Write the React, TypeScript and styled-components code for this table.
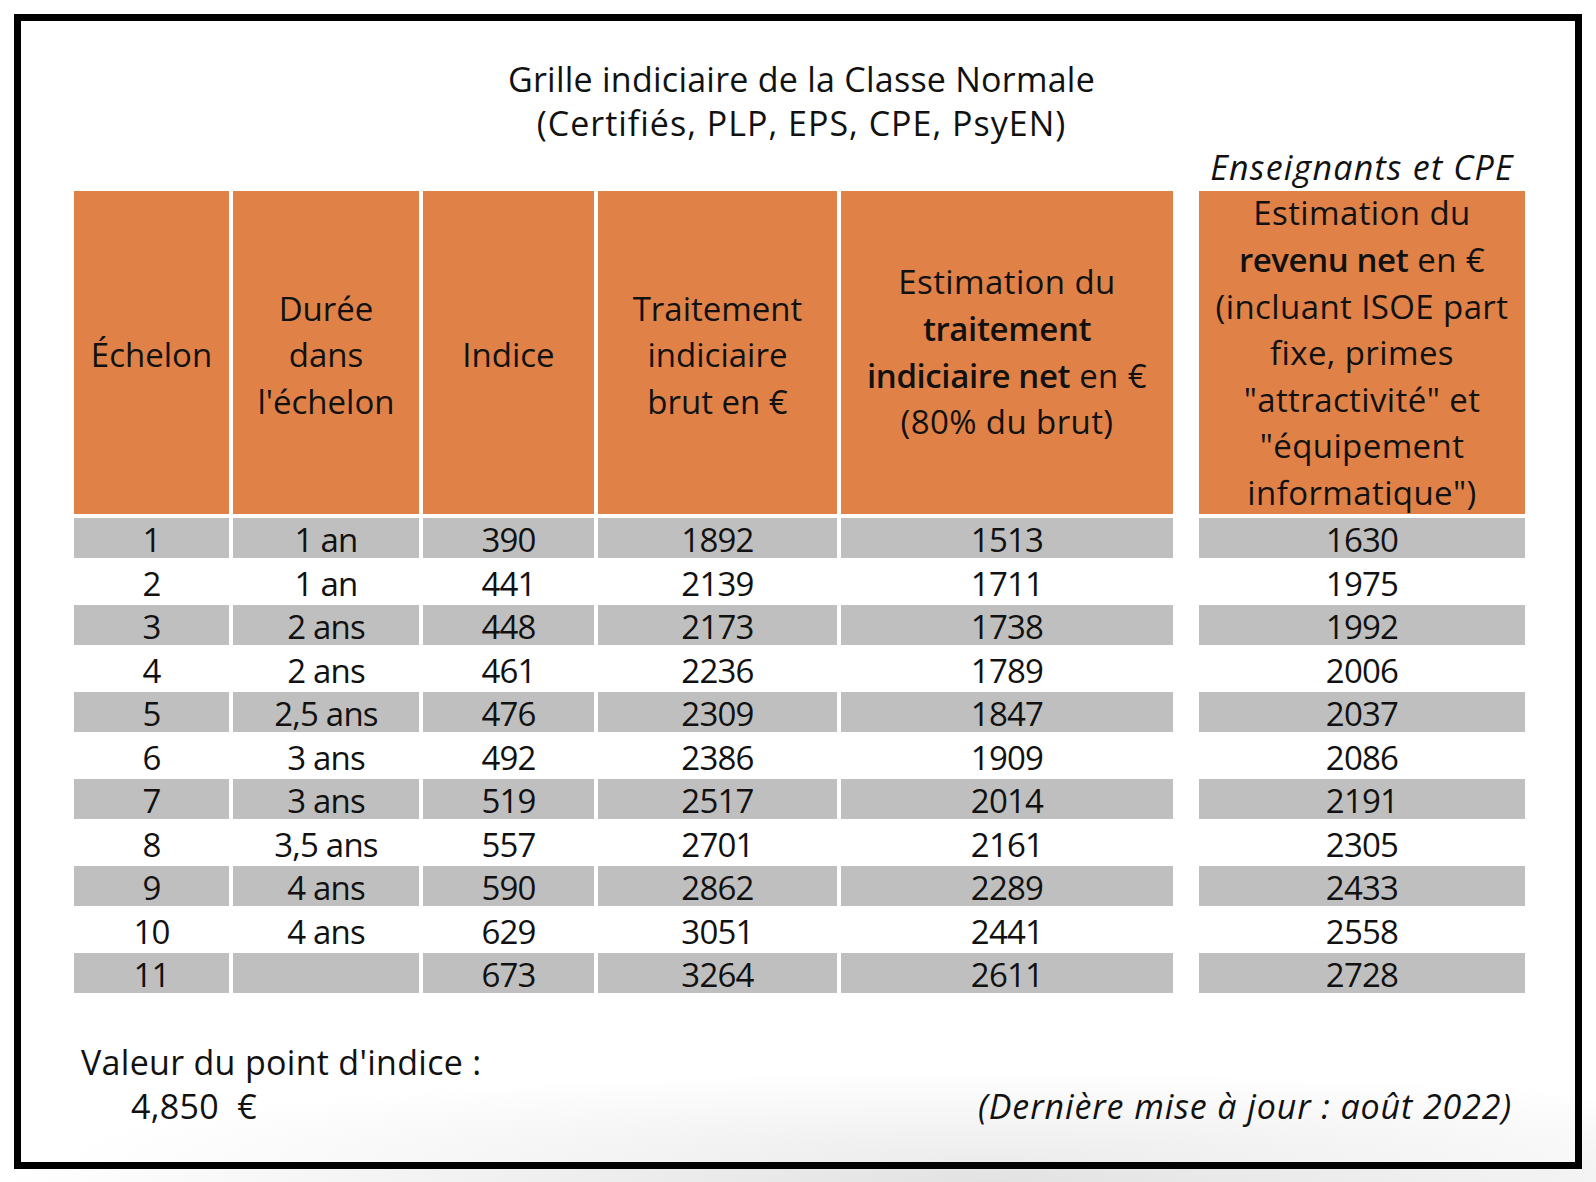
import React from "react";
import styled, { createGlobalStyle } from "styled-components";

const GlobalStyle = createGlobalStyle`
  html, body {
    margin: 0;
    padding: 0;
    background: #ffffff;
  }
  body {
    font-family: "Open Sans", "Noto Sans", sans-serif;
    color: #111111;
  }
`;

const Page = styled.div`
  width: 1596px;
  height: 1182px;
  box-sizing: border-box;
  padding: 14px 14px 13px 14px;
  background:
    radial-gradient(ellipse 62% 9% at 62% 100%, #e2e2e2 0%, rgba(255, 255, 255, 0) 100%),
    #ffffff;
`;

const Frame = styled.div`
  width: 1568px;
  height: 1155px;
  box-sizing: border-box;
  border: 7px solid #000000;
  padding: 36px 50px 0 53px;
  display: flex;
  flex-direction: column;
  background:
    radial-gradient(ellipse 60% 8% at 62% 100%, #ececec 0%, rgba(255, 255, 255, 0) 100%),
    #ffffff;
`;

const Title = styled.h1`
  margin: 0;
  padding-left: 4px;
  font-size: 34px;
  line-height: 44px;
  font-weight: 400;
  text-align: center;
  letter-spacing: 0.25px;
  color: #111;
`;

const TitleSub = styled.span`
  letter-spacing: 1px;
`;

const CaptionRow = styled.div`
  display: flex;
  justify-content: flex-end;
  margin-top: 2px;
`;

const Caption = styled.div`
  width: 326px;
  text-align: center;
  font-style: italic;
  font-size: 34px;
  line-height: 40px;
  letter-spacing: 1.2px;
  white-space: nowrap;
`;

const Tables = styled.div`
  display: flex;
  gap: 26px;
  margin-top: 4px;
`;

const Grid = styled.div<{ $cols: string }>`
  display: grid;
  grid-template-columns: ${(p) => p.$cols};
  grid-template-rows: 323px repeat(11, 39.5px);
  column-gap: 4px;
  row-gap: 4px;
`;

const HeadCell = styled.div<{ $shift?: number; $spacing?: number }>`
  background: #e08247;
  display: flex;
  align-items: center;
  justify-content: center;
  text-align: center;
  font-size: 33px;
  line-height: 46.6px;
  letter-spacing: ${(p) => p.$spacing ?? 0}px;
  padding-top: ${(p) => p.$shift ?? 0}px;
  box-sizing: border-box;
  overflow: visible;
  white-space: nowrap;
  color: #111;

  b {
    font-weight: 600;
    letter-spacing: -0.4px;
  }
`;

const DataCell = styled.div<{ $shade: boolean }>`
  background: ${(p) => (p.$shade ? "#bfbfbf" : "transparent")};
  text-align: center;
  font-size: 33px;
  line-height: 39.5px;
  letter-spacing: -0.8px;
  padding-top: 2px;
  box-sizing: border-box;
  white-space: nowrap;
  color: #111;
`;

const Footer = styled.div`
  display: flex;
  justify-content: space-between;
  align-items: flex-end;
  margin-top: 47px;
  padding: 0 13px 0 7px;
  font-size: 34px;
  line-height: 44px;
`;

const PointBlock = styled.div`
  display: flex;
  flex-direction: column;
  letter-spacing: 0.3px;
`;

const PointValue = styled.div`
  padding-left: 50px;
`;

const UpdateNote = styled.div`
  font-style: italic;
  letter-spacing: 0.9px;
  white-space: nowrap;
`;

type Row = [string, string, string, string, string, string];

const rows: Row[] = [
  ["1", "1 an", "390", "1892", "1513", "1630"],
  ["2", "1 an", "441", "2139", "1711", "1975"],
  ["3", "2 ans", "448", "2173", "1738", "1992"],
  ["4", "2 ans", "461", "2236", "1789", "2006"],
  ["5", "2,5 ans", "476", "2309", "1847", "2037"],
  ["6", "3 ans", "492", "2386", "1909", "2086"],
  ["7", "3 ans", "519", "2517", "2014", "2191"],
  ["8", "3,5 ans", "557", "2701", "2161", "2305"],
  ["9", "4 ans", "590", "2862", "2289", "2433"],
  ["10", "4 ans", "629", "3051", "2441", "2558"],
  ["11", "", "673", "3264", "2611", "2728"],
];

export default function App() {
  return (
    <>
      <GlobalStyle />
      <Page>
        <Frame>
          <Title>
            Grille indiciaire de la Classe Normale
            <br />
            <TitleSub>(Certifiés, PLP, EPS, CPE, PsyEN)</TitleSub>
          </Title>
          <CaptionRow>
            <Caption>Enseignants et CPE</Caption>
          </CaptionRow>
          <Tables>
            <Grid $cols="155px 186px 171px 239px 332px">
              <HeadCell $shift={6}>Échelon</HeadCell>
              <HeadCell $shift={6}>
                <div>
                  Durée
                  <br />
                  dans
                  <br />
                  l'échelon
                </div>
              </HeadCell>
              <HeadCell $shift={6}>Indice</HeadCell>
              <HeadCell $shift={6}>
                <div>
                  Traitement
                  <br />
                  indiciaire
                  <br />
                  brut en €
                </div>
              </HeadCell>
              <HeadCell $spacing={0.4}>
                <div>
                  Estimation du
                  <br />
                  <b>traitement</b>
                  <br />
                  <b>indiciaire net</b> en €
                  <br />
                  (80% du brut)
                </div>
              </HeadCell>
              {rows.map((r, i) =>
                r.slice(0, 5).map((v, j) => (
                  <DataCell key={`${i}-${j}`} $shade={i % 2 === 0}>
                    {v}
                  </DataCell>
                ))
              )}
            </Grid>
            <Grid $cols="326px">
              <HeadCell $shift={2} $spacing={0.4}>
                <div>
                  Estimation du
                  <br />
                  <b>revenu net</b> en €
                  <br />
                  (incluant ISOE part
                  <br />
                  fixe, primes
                  <br />
                  "attractivité" et
                  <br />
                  "équipement
                  <br />
                  informatique")
                </div>
              </HeadCell>
              {rows.map((r, i) => (
                <DataCell key={`s-${i}`} $shade={i % 2 === 0}>
                  {r[5]}
                </DataCell>
              ))}
            </Grid>
          </Tables>
          <Footer>
            <PointBlock>
              <div>Valeur du point d'indice :</div>
              <PointValue>{"4,850\u00a0\u00a0€"}</PointValue>
            </PointBlock>
            <UpdateNote>(Dernière mise à jour : août 2022)</UpdateNote>
          </Footer>
        </Frame>
      </Page>
    </>
  );
}
